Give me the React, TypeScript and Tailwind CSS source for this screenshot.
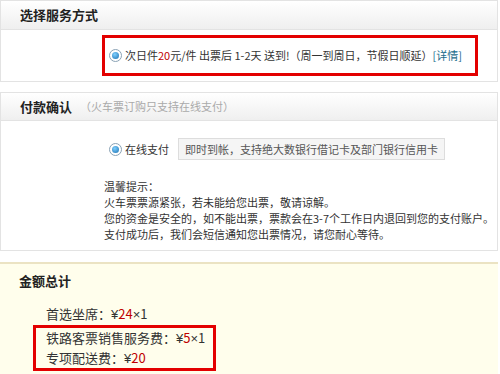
import React from "react";

const font = { fontFamily: '"Noto Sans CJK SC", "Noto Sans", sans-serif' };
const latin = { fontFamily: '"Liberation Sans", "Noto Sans", sans-serif' };

function Radio() {
  return (
    <span className="inline-flex items-center justify-center w-[13px] h-[13px] rounded-full border border-[#8aa2b5] bg-white shrink-0">
      <span className="w-[7px] h-[7px] rounded-full bg-[radial-gradient(circle_at_40%_35%,#7fd0ff,#1a6fb0)]" />
    </span>
  );
}

export default function App() {
  return (
    <div className="w-[500px] h-[374px] bg-white overflow-hidden text-[#333]" style={font}>
      {/* Section 1 */}
      <div className="mr-[2px] border border-[#e3e3e3]">
        <div className="h-[29px] flex items-center pl-[19px] bg-gradient-to-b from-white to-[#efefef] border-b border-[#e3e3e3]">
          <span className="text-[13px] font-bold text-[#222]">选择服务方式</span>
        </div>
        <div className="h-[51px] flex items-center pl-[101px]">
          <div className="w-[376px] h-[41px] border-[3px] border-[#e30000] flex items-center pl-[4px] text-[11px]">
            <Radio />
            <span className="ml-[3px] whitespace-nowrap">
              次日件<span className="text-[#c00000]">20</span>元/件 出票后 1-2天 送到!（周一到周日，节假日顺延）<span className="text-[#1a6b8a]">[详情]</span>
            </span>
          </div>
        </div>
      </div>

      {/* Section 2 */}
      <div className="mt-[10px] mr-[2px] border border-[#e3e3e3]">
        <div className="h-[28px] flex items-center pl-[19px] bg-gradient-to-b from-white to-[#efefef] border-b border-[#e3e3e3]">
          <span className="text-[13px] font-bold text-[#222]">付款确认</span>
          <span className="ml-[8px] text-[11px] text-[#aaa]">（火车票订购只支持在线支付）</span>
        </div>
        <div className="pl-[108px] pt-[17px] pb-[8px]">
          <div className="flex items-center h-[22px] text-[11px]">
            <Radio />
            <span className="ml-[3px]">在线支付</span>
            <span className="ml-[9px] h-[22px] flex items-center px-[6px] border border-[#ddd] bg-[#f5f5f5] text-[#555]">
              即时到帐，支持绝大数银行借记卡及部门银行信用卡
            </span>
          </div>
          <div className="mt-[18px] -ml-[5px] text-[11px] leading-[16px] text-[#333]">
            <div>温馨提示：</div>
            <div>火车票票源紧张，若未能给您出票，敬请谅解。</div>
            <div>您的资金是安全的，如不能出票，票款会在3-7个工作日内退回到您的支付账户。</div>
            <div>支付成功后，我们会短信通知您出票情况，请您耐心等待。</div>
          </div>
        </div>
      </div>

      {/* Section 3 */}
      <div className="mt-[11px] mr-[2px] h-[120px] bg-[#fffeec] border-t-[2px] border-[#ebe3c3] pl-[19px] pt-[7px]">
        <div className="text-[13px] font-bold text-[#222] leading-[20px]">金额总计</div>
        <div className="mt-[12px] pl-[27px] text-[13px] leading-[21px] text-[#333]">
          首选坐席：<span style={latin}>¥</span><span className="text-[#c00000]">24</span><span style={latin}>×</span>1
        </div>
        <div className="ml-[14px] w-[183px] border-[3px] border-[#e30000] pl-[10px] text-[13px] leading-[19px] text-[#333]">
          <div>铁路客票销售服务费：<span style={latin}>¥</span><span className="text-[#c00000]">5</span><span style={latin}>×</span>1</div>
          <div>专项配送费：<span style={latin}>¥</span><span className="text-[#c00000]">20</span></div>
        </div>
      </div>
    </div>
  );
}
